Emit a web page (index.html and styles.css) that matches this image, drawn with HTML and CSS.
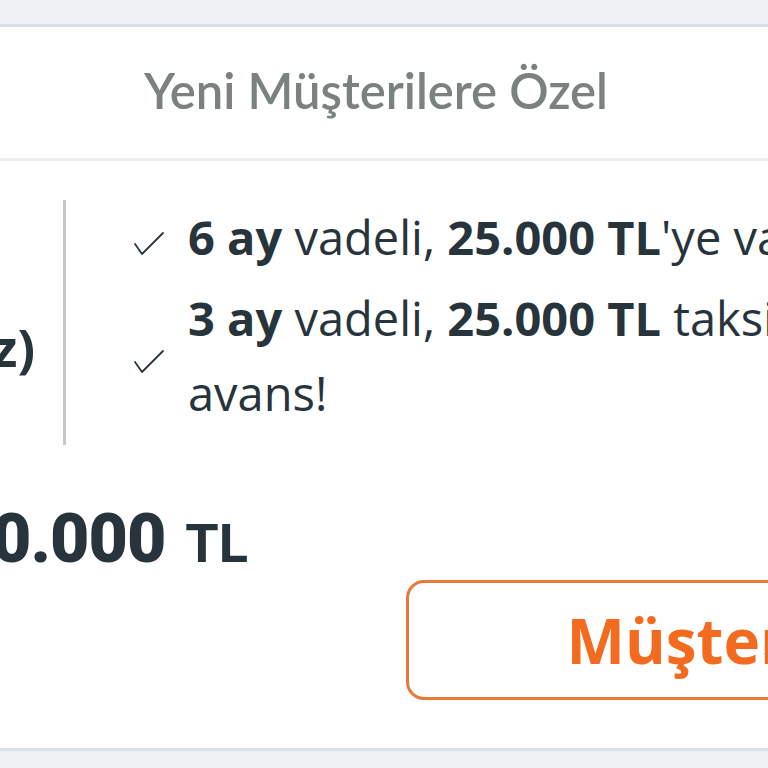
FILE: index.html
```html
<!DOCTYPE html>
<html lang="tr">
<head>
    <meta charset="UTF-8">
    <meta name="viewport" content="width=device-width, initial-scale=1.0">
    <title>Yeni Müşterilere Özel</title>
    <link rel="stylesheet" href="styles.css">
</head>
<body>
    <div class="page">
        <section class="card">
            <div class="card-head">Yeni Müşterilere Özel</div>

            <div class="offer">
                <div class="offer-title"><span>Kredi Kartı (Aidatsız)</span></div>
                <ul class="perks">
                    <li>
                        <svg class="check" viewBox="0 0 32 26" width="32" height="26"><path d="M2 13 L9 23 L30 2" fill="none" stroke="#2a363d" stroke-width="1.8" stroke-linecap="round" stroke-linejoin="round"/></svg>
                        <span class="perk-text"><b>6 ay</b> vadeli, <strong>25.000 TL</strong>'ye varan kredi!</span>
                    </li>
                    <li>
                        <svg class="check" viewBox="0 0 32 26" width="32" height="26"><path d="M2 13 L9 23 L30 2" fill="none" stroke="#2a363d" stroke-width="1.8" stroke-linecap="round" stroke-linejoin="round"/></svg>
                        <span class="perk-text"><b>3 ay</b> vadeli, <strong>25.000 TL</strong> taksitli nakit avans!</span>
                    </li>
                </ul>
            </div>

            <div class="card-foot">
                <div class="limit"><strong>100.000</strong> <span>TL</span></div>
                <a class="cta" href="#">Müşteri Ol</a>
            </div>
        </section>
    </div>
</body>
</html>
```

FILE: styles.css
```css
body {
    margin: 0;
    background-color: #eef2f5;
    font-family: 'Open Sans', 'Lato', sans-serif;
    color: #27343b;
    overflow: hidden;
}

.page {
    padding-top: 24px;
}

.card {
    margin-left: -400px;
    width: 1552px;
    background-color: #fff;
    border-top: 3px solid #dcdfe2;
    border-bottom: 3px solid #dcdfe2;
}

.card-head {
    height: 125px;
    padding-bottom: 6px;
    display: flex;
    align-items: center;
    justify-content: center;
    font-family: 'Lato', sans-serif;
    font-size: 49px;
    font-weight: 600;
    color: #7b8081;
    border-bottom: 3px solid #eceeef;
}

.offer {
    display: flex;
    margin-top: 39px;
}

.offer-title {
    flex: none;
    width: 435px;
    padding: 109px 28px 0 0;
    border-right: 3px solid #c8c8c8;
    display: flex;
    justify-content: flex-end;
    align-items: flex-start;
    font-size: 52px;
    line-height: 75px;
    font-weight: 700;
    white-space: nowrap;
    overflow: hidden;
}

.offer-title span {
    flex: none;
}

.perks {
    list-style: none;
    margin: 0;
    padding: 0 0 14px 67px;
    display: flex;
    flex-direction: column;
    gap: 6px;
}

.perks li {
    display: flex;
    align-items: center;
    gap: 23px;
    font-size: 47px;
    line-height: 75px;
}

.check {
    flex: none;
    margin-top: 12px;
}

.perk-text {
    width: 820px;
}

.perk-text b,
.perk-text strong {
    font-weight: 700;
}

.card-foot {
    display: flex;
    flex-direction: column;
    align-items: flex-start;
    padding-bottom: 48px;
}

.limit {
    width: 648px;
    margin-top: 58px;
    text-align: right;
    font-family: 'Roboto', sans-serif;
    font-size: 54px;
    font-weight: 700;
    line-height: 72px;
}

.limit strong {
    font-size: 68px;
    letter-spacing: -1px;
    margin-right: 8px;
}

.cta {
    width: 640px;
    height: 114px;
    margin-left: 806px;
    border: 3px solid #e7793b;
    border-radius: 18px;
    display: flex;
    align-items: center;
    justify-content: center;
    color: #f26b1f;
    font-size: 62px;
    font-weight: 700;
    text-decoration: none;
}
```
